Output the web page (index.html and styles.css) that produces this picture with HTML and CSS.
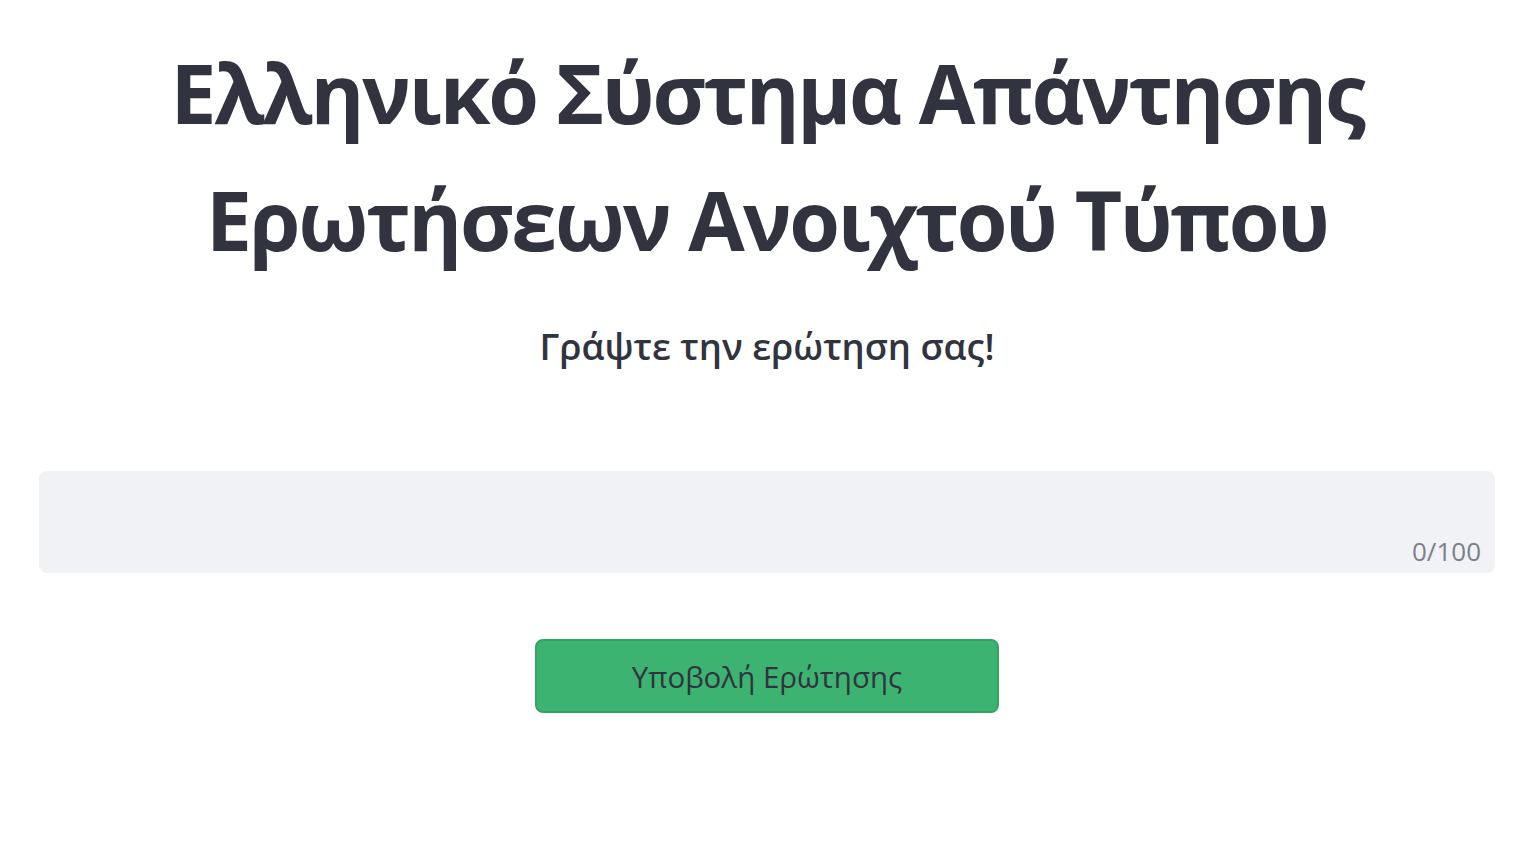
FILE: index.html
```html
<!DOCTYPE html>
<html lang="el">
<head>
<meta charset="utf-8">
<title>Ελληνικό Σύστημα Απάντησης Ερωτήσεων Ανοιχτού Τύπου</title>
<link rel="stylesheet" href="styles.css">
</head>
<body>
<main class="page">
  <h1 class="title">Ελληνικό Σύστημα Απάντησης Ερωτήσεων Ανοιχτού Τύπου</h1>
  <h3 class="subtitle">Γράψτε την ερώτηση σας!</h3>
  <div class="field">
    <textarea class="question" maxlength="100" aria-label="Ερώτηση"></textarea>
    <span class="counter">0/100</span>
  </div>
  <div class="actions">
    <button class="submit" type="button">Υποβολή Ερώτησης</button>
  </div>
</main>
</body>
</html>
```
FILE: styles.css
```css
html, body {
  margin: 0;
  padding: 0;
  background: #ffffff;
}
body {
  font-family: "Open Sans", "Noto Sans", sans-serif;
  color: #31333f;
}
.page {
  padding: 29px 23px 0 39px;
  display: flex;
  flex-direction: column;
}
.title {
  margin: 0;
  text-align: center;
  font-size: 82px;
  line-height: 127px;
  font-weight: 700;
  letter-spacing: -2.3px;
}
.subtitle {
  margin: 39px 0 0;
  text-align: center;
  font-size: 36.5px;
  line-height: 48px;
  font-weight: 600;
}
.field {
  position: relative;
  margin-top: 101px;
  height: 102px;
}
.question {
  box-sizing: border-box;
  width: 100%;
  height: 102px;
  border: none;
  border-radius: 8px;
  background: #f0f2f6;
  resize: none;
  outline: none;
  display: block;
}
.counter {
  position: absolute;
  right: 14px;
  bottom: 4px;
  font-size: 26px;
  color: #7d7f87;
}
.actions {
  display: flex;
  justify-content: center;
  margin-top: 66px;
}
.submit {
  width: 464px;
  height: 74px;
  background: #3cb371;
  border: 2px solid #35a366;
  border-radius: 8px;
  font-family: "Open Sans", "Noto Sans", sans-serif;
  font-size: 29.5px;
  color: #31333f;
}
```
